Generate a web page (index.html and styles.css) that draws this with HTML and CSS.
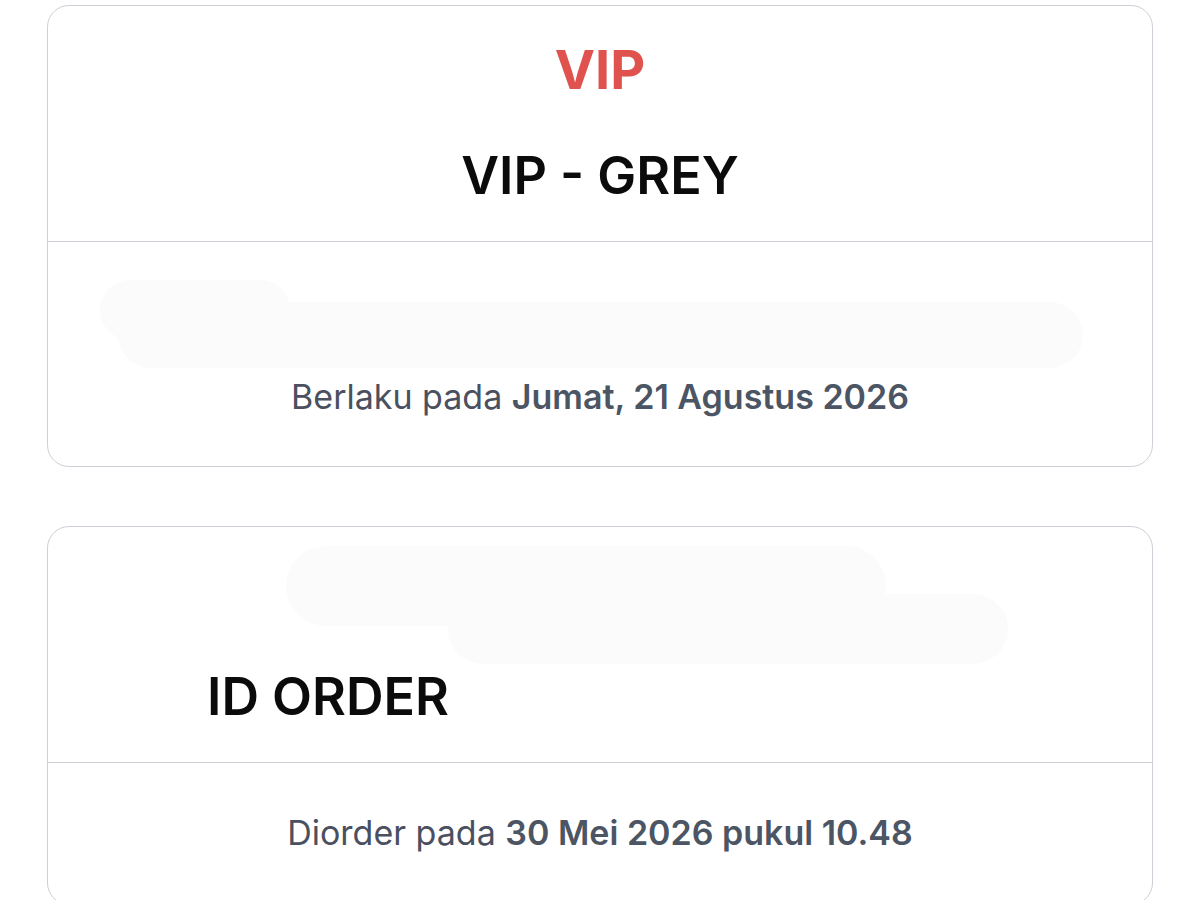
FILE: index.html
```html
<!DOCTYPE html>
<html lang="id">
<head>
    <meta charset="UTF-8">
    <meta name="viewport" content="width=device-width, initial-scale=1.0">
    <title>Tiket</title>
    <link rel="stylesheet" href="styles.css">
</head>
<body>
    <div class="page">

        <div class="card">
            <div class="card-top">
                <div class="category">VIP</div>
                <div class="ticket-name">VIP - GREY</div>
            </div>
            <div class="card-bottom">
                <div class="redacted redacted-holder">
                    <span class="smudge smudge-a"></span>
                    <span class="smudge smudge-b"></span>
                </div>
                <p class="meta">Berlaku pada <strong>Jumat, 21 Agustus 2026</strong></p>
            </div>
        </div>

        <div class="card">
            <div class="card-top">
                <div class="redacted redacted-title">
                    <span class="smudge smudge-c"></span>
                    <span class="smudge smudge-d"></span>
                </div>
                <div class="order-id">ID ORDER <span class="order-code"></span></div>
            </div>
            <div class="card-bottom card-bottom-order">
                <p class="meta">Diorder pada <strong>30 Mei 2026 pukul 10.48</strong></p>
            </div>
        </div>

    </div>
</body>
</html>
```

FILE: styles.css
```css
body {
    font-family: Inter, "Noto Sans", sans-serif;
    margin: 0;
    padding: 0;
    background-color: #ffffff;
    color: #0b0b0c;
}

.page {
    padding: 5px 47px 0 47px;
    display: flex;
    flex-direction: column;
    gap: 59px;
}

.card {
    border: 1.5px solid #cdd0d6;
    border-radius: 22px;
    overflow: hidden;
}

.card-top {
    position: relative;
    display: flex;
    flex-direction: column;
    align-items: center;
    gap: 53px;
    padding: 37px 0 39px 0;
    border-bottom: 1.5px solid #cdd0d6;
}

.category {
    font-size: 54px;
    line-height: 1;
    font-weight: 700;
    color: #df524d;
}

.ticket-name,
.order-id {
    font-size: 52px;
    line-height: 1;
    font-weight: 600;
    color: #0b0b0c;
}

.order-id {
    display: flex;
    align-items: center;
    gap: 14px;
}

.order-code {
    display: inline-block;
    width: 530px;
    height: 52px;
}

.card-bottom {
    display: flex;
    flex-direction: column;
    align-items: center;
    gap: 14px;
    padding: 34px 0 52px 0;
}

.card-bottom-order {
    padding: 53px 0 54px 0;
}

.meta {
    margin: 0;
    font-size: 34px;
    line-height: 1;
    color: #4b5060;
}

.meta strong {
    font-weight: 600;
    color: #4b5563;
}

/* blurred-out parts of the ticket */
.redacted {
    position: relative;
    width: 100%;
}

.redacted-holder {
    height: 90px;
}

.redacted-title {
    height: 54px;
}

.smudge {
    position: absolute;
    background: #fbfbfc;
    border-radius: 40px;
}

.smudge-a {
    left: 52px;
    top: 4px;
    width: 190px;
    height: 60px;
}

.smudge-b {
    left: 70px;
    top: 26px;
    width: 965px;
    height: 66px;
}

.smudge-c {
    left: 238px;
    top: -18px;
    width: 600px;
    height: 80px;
}

.smudge-d {
    left: 400px;
    top: 30px;
    width: 560px;
    height: 70px;
}
```
